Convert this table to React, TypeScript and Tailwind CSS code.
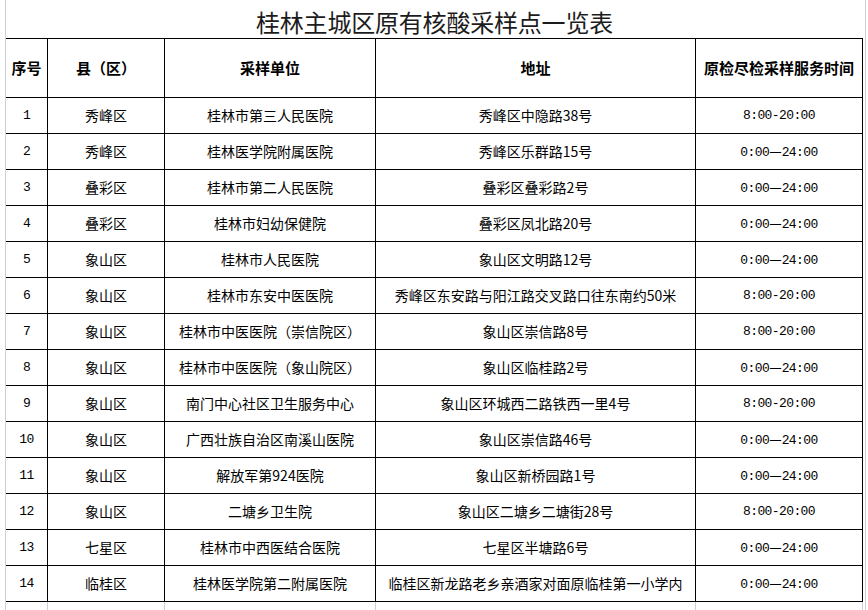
import React from 'react';

interface SiteRow {
  no: number;
  county: string;
  unit: string;
  address: string;
  hours: string;
}

const rows: SiteRow[] = [
  { no: 1, county: '秀峰区', unit: '桂林市第三人民医院', address: '秀峰区中隐路38号', hours: '8:00-20:00' },
  { no: 2, county: '秀峰区', unit: '桂林医学院附属医院', address: '秀峰区乐群路15号', hours: '0:00—24:00' },
  { no: 3, county: '叠彩区', unit: '桂林市第二人民医院', address: '叠彩区叠彩路2号', hours: '0:00—24:00' },
  { no: 4, county: '叠彩区', unit: '桂林市妇幼保健院', address: '叠彩区凤北路20号', hours: '0:00—24:00' },
  { no: 5, county: '象山区', unit: '桂林市人民医院', address: '象山区文明路12号', hours: '0:00—24:00' },
  { no: 6, county: '象山区', unit: '桂林市东安中医医院', address: '秀峰区东安路与阳江路交叉路口往东南约50米', hours: '8:00-20:00' },
  { no: 7, county: '象山区', unit: '桂林市中医医院（崇信院区）', address: '象山区崇信路8号', hours: '8:00-20:00' },
  { no: 8, county: '象山区', unit: '桂林市中医医院（象山院区）', address: '象山区临桂路2号', hours: '0:00—24:00' },
  { no: 9, county: '象山区', unit: '南门中心社区卫生服务中心', address: '象山区环城西二路铁西一里4号', hours: '8:00-20:00' },
  { no: 10, county: '象山区', unit: '广西壮族自治区南溪山医院', address: '象山区崇信路46号', hours: '0:00—24:00' },
  { no: 11, county: '象山区', unit: '解放军第924医院', address: '象山区新桥园路1号', hours: '0:00—24:00' },
  { no: 12, county: '象山区', unit: '二塘乡卫生院', address: '象山区二塘乡二塘街28号', hours: '8:00-20:00' },
  { no: 13, county: '七星区', unit: '桂林市中西医结合医院', address: '七星区半塘路6号', hours: '0:00—24:00' },
  { no: 14, county: '临桂区', unit: '桂林医学院第二附属医院', address: '临桂区新龙路老乡亲酒家对面原临桂第一小学内', hours: '0:00—24:00' },
];

const headers = ['序号', '县（区）', '采样单位', '地址', '原检尽检采样服务时间'];

const cjk = "font-['Noto_Sans_CJK_SC',sans-serif]";
const mono = "font-['Liberation_Mono','Noto_Sans_CJK_SC',monospace] text-[13px] tracking-[-0.6px]";

const Hours: React.FC<{ value: string }> = ({ value }) => {
  const parts = value.split('—');
  if (parts.length === 1) return <span className={mono}>{value}</span>;
  return (
    <span>
      <span className={mono}>{parts[0]}</span>
      <span className={`${cjk} text-[14px]`}>—</span>
      <span className={mono}>{parts[1]}</span>
    </span>
  );
};

const Cell: React.FC<{ children: React.ReactNode }> = ({ children }) => (
  <div className="h-[36px] flex items-center justify-center border-r border-b border-black whitespace-nowrap overflow-hidden">
    {children}
  </div>
);

const App: React.FC = () => {
  return (
    <div className={`w-[868px] h-[610px] bg-white overflow-hidden flex text-black ${cjk}`}>
      <div className="w-[6px] shrink-0 border-r border-[#c9d0dc]" />

      <div className="w-[857px] shrink-0 flex flex-col">
        <div className="h-[38px] shrink-0 flex items-center justify-center pt-[5px]">
          <h1 className="text-[24px] leading-none font-normal text-[#1c1c1c] tracking-[-0.2px]">
            桂林主城区原有核酸采样点一览表
          </h1>
        </div>

        <div className="shrink-0 grid grid-cols-[42px_117px_211px_320px_167px] border-t border-black text-[14px]">
          {headers.map((h) => (
            <div
              key={h}
              className="h-[59px] flex items-center justify-center border-r border-b border-black font-bold text-[15px] whitespace-nowrap"
            >
              {h}
            </div>
          ))}

          {rows.map((r) => (
            <React.Fragment key={r.no}>
              <Cell>
                <span className={mono}>{r.no}</span>
              </Cell>
              <Cell>{r.county}</Cell>
              <Cell>{r.unit}</Cell>
              <Cell>{r.address}</Cell>
              <Cell>
                <Hours value={r.hours} />
              </Cell>
            </React.Fragment>
          ))}

          {headers.map((h) => (
            <div key={`blank-${h}`} className="h-[12px] border-r border-[#c9d0dc]" />
          ))}
        </div>
      </div>

      <div className="w-[3px] shrink-0 border-r border-[#c9d0dc]" />
      <div className="flex-1" />
    </div>
  );
};

export default App;
